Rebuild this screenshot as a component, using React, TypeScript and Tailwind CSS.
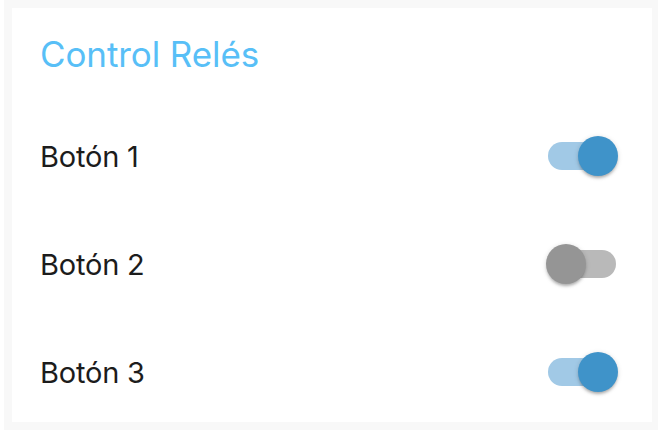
import { useState } from "react";

interface ToggleProps {
  on: boolean;
  onChange: () => void;
}

function Toggle({ on, onChange }: ToggleProps) {
  return (
    <button
      onClick={onChange}
      className="relative w-[72px] h-[40px] shrink-0 cursor-pointer"
      aria-pressed={on}
    >
      {/* track */}
      <span
        className={`absolute left-[2px] top-[6px] w-[68px] h-[28px] rounded-full ${
          on ? "bg-[#a1c9e6]" : "bg-[#b9b9b9]"
        }`}
      />
      {/* thumb */}
      <span
        className={`absolute top-0 w-[40px] h-[40px] rounded-full shadow-[0_3px_3px_-1px_rgba(0,0,0,0.25),0_1px_5px_rgba(0,0,0,0.15)] ${
          on ? "left-[32px] bg-[#3f93c9]" : "left-0 bg-[#959595]"
        }`}
      />
    </button>
  );
}

export default function App() {
  const [relays, setRelays] = useState([true, false, true]);

  const flip = (i: number) =>
    setRelays((r) => r.map((v, j) => (j === i ? !v : v)));

  return (
    <div
      className="w-[658px] h-[430px] bg-[#f8f8f8] border-l-4 border-white pt-2"
      style={{ fontFamily: "Inter, 'Noto Sans', sans-serif" }}
    >
      <div className="ml-2 w-[640px] h-[414px] bg-white overflow-hidden pl-[28px] pr-[34px] pt-[26px]">
        {/* ── Title ── */}
        <h1 className="h-[40px] mb-[28px] flex items-center text-[35px] leading-none text-[#58bff7] tracking-[-0.1px]">
          Control Relés
        </h1>

        {/* ── Relay rows ── */}
        {relays.map((on, i) => (
          <div key={i} className="h-[108px] flex items-center justify-between">
            <span className="text-[29px] leading-none text-[#1c1c1c] tracking-[-0.2px]">
              Botón {i + 1}
            </span>
            <Toggle on={on} onChange={() => flip(i)} />
          </div>
        ))}
      </div>
    </div>
  );
}
